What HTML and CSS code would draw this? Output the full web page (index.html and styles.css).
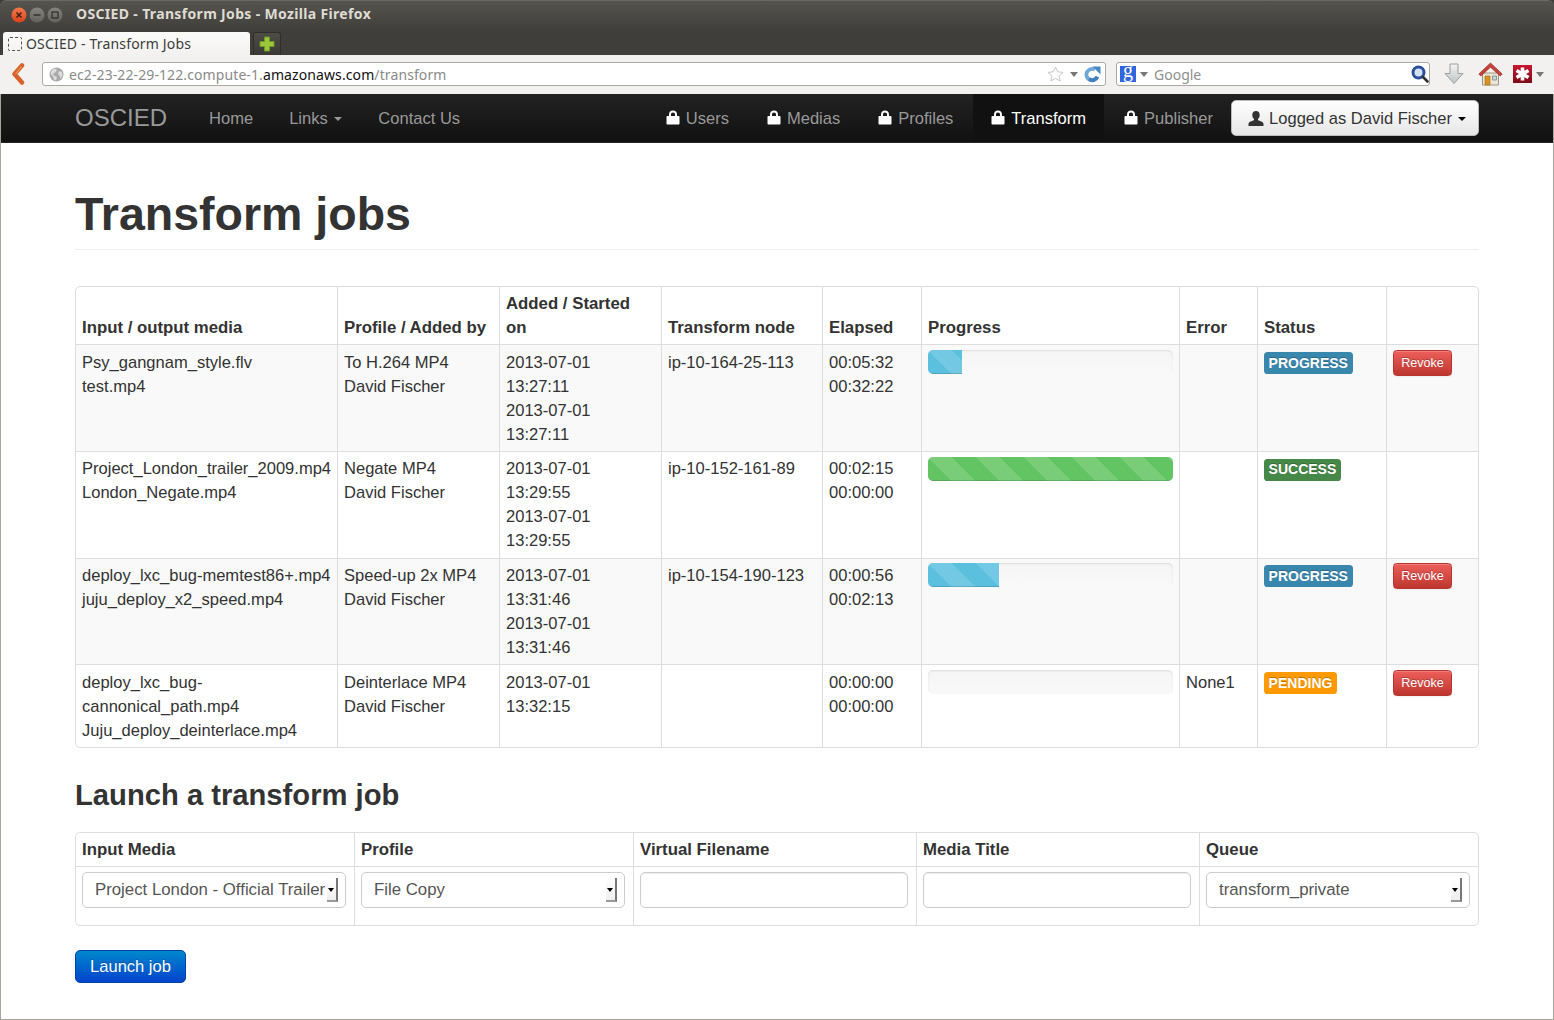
FILE: index.html
```html
<!DOCTYPE html>
<html>
<head>
  <title>OSCIED - Transform Jobs</title>
  <link rel="stylesheet" href="styles.css">
</head>
<body>

  <svg class="defs" width="0" height="0">
    <symbol id="lock" viewBox="0 0 14 15">
      <path d="M3 6V4.500C3 2 4.700 .6 7 .6s4 1.400 4 3.900V6h1.500c.6 0 1 .4 1 1v6.500c0 .6-.4 1-1 1h-11c-.6 0-1-.4-1-1V7c0-.6.4-1 1-1zM5 6h4V4.500C9 3.300 8.200 2.600 7 2.600S5 3.300 5 4.500z" fill="#fff"/>
    </symbol>
    <symbol id="tri" viewBox="0 0 8 5">
      <path d="M0 0h8L4 5z"/>
    </symbol>
  </svg>

  <div class="window">

    <!-- Firefox window chrome -->
    <div class="titlebar">
      <div class="wm-buttons">
        <svg class="wm-btn" viewBox="0 0 16 16"><defs><linearGradient id="redBtn" x1="0" y1="0" x2="0" y2="1"><stop offset="0" stop-color="#f47a4a"/><stop offset="1" stop-color="#d8431a"/></linearGradient></defs><circle cx="8" cy="8" r="7.500" fill="url(#redBtn)"/><path d="M5.500 5.500l5 5m0-5l-5 5" stroke="#3c2015" stroke-width="1.500"/></svg>
        <svg class="wm-btn" viewBox="0 0 16 16"><defs><linearGradient id="greyBtn" x1="0" y1="0" x2="0" y2="1"><stop offset="0" stop-color="#85847e"/><stop offset="1" stop-color="#62615c"/></linearGradient></defs><circle cx="8" cy="8" r="7.500" fill="url(#greyBtn)"/><path d="M4.500 8h7" stroke="#33322e" stroke-width="1.500"/></svg>
        <svg class="wm-btn" viewBox="0 0 16 16"><circle cx="8" cy="8" r="7.500" fill="url(#greyBtn)"/><rect x="5" y="5" width="6" height="6" fill="none" stroke="#33322e" stroke-width="1.300"/></svg>
      </div>
      <span class="window-title">OSCIED - Transform Jobs - Mozilla Firefox</span>
    </div>

    <div class="tabbar">
      <div class="tab">
        <span class="tab-favicon"></span>
        <span class="tab-title">OSCIED - Transform Jobs</span>
      </div>
      <div class="newtab">
        <svg width="16" height="16" viewBox="0 0 16 16"><path d="M5.500 1h5v4.500H15v5h-4.500V15h-5v-4.500H1v-5h4.500z" fill="#9cc63c" stroke="#6f9a22"/></svg>
      </div>
    </div>

    <div class="toolbar">
      <svg class="back-icon" width="14" height="22" viewBox="0 0 14 22"><path d="M11 2.500L3.500 11l7.500 8.500" fill="none" stroke="#d5632a" stroke-width="4.500" stroke-linejoin="round" stroke-linecap="round"/><path d="M10.500 3.500L4.500 11" fill="none" stroke="#f09a62" stroke-width="1.200"/></svg>

      <div class="urlbar">
        <svg class="globe" width="15" height="15" viewBox="0 0 15 15"><circle cx="7.500" cy="7.500" r="7" fill="#a9a9a9"/><path d="M5 1.500l3 1-1 2.500-3 1.500 1.500 2.500 2.500 1-1 3.500-2-1-1-3.500L1.500 7C2 4.500 3 2.500 5 1.500zM10 4l3 1 .5 3.500-2 3-1-3-1.500-1.500z" fill="#dcdcdc"/></svg>
        <span class="url"><span class="url-dim">ec2-23-22-29-122.compute-1.</span>amazonaws.com<span class="url-dim">/transform</span></span>
        <svg class="star" width="17" height="16" viewBox="0 0 17 16"><path d="M8.500 1l2.200 4.800 5.300.6-3.900 3.500 1.100 5.100-4.700-2.600L3.800 15l1.100-5.100L1 6.400l5.300-.6z" fill="#fff" stroke="#c9c9c9"/></svg>
        <svg class="tri" width="8" height="5"><use href="#tri"/></svg>
        <svg class="reload" width="17" height="17" viewBox="0 0 17 17"><path d="M13.400 10.800A5.700 5.700 0 1 1 10.800 3.600" fill="none" stroke="#6ea6d8" stroke-width="3.800"/><path d="M13.400 10.800A5.700 5.700 0 0 1 5 13" fill="none" stroke="#3f7fbe" stroke-width="3.800"/><path d="M8.500 .5h8v8z" fill="#4a87c4"/></svg>
      </div>

      <div class="searchbar">
        <span class="google-g">g</span>
        <svg class="tri" width="8" height="5"><use href="#tri"/></svg>
        <span class="search-text">Google</span>
        <svg class="magnifier" width="18" height="18" viewBox="0 0 18 18"><circle cx="7.500" cy="7.500" r="5.500" fill="#d5e2f2" stroke="#2b4f9e" stroke-width="3"/><path d="M12 12l4.500 4.500" stroke="#333" stroke-width="2.600" stroke-linecap="round"/></svg>
      </div>

      <svg class="download" width="20" height="23" viewBox="0 0 20 23"><defs><linearGradient id="dlFill" x1="0" y1="0" x2="0" y2="1"><stop offset="0" stop-color="#f4f4f2"/><stop offset="1" stop-color="#bcc3c6"/></linearGradient></defs><path d="M6 1h8v9.500h5L10 20.500 1 10.500h5z" fill="url(#dlFill)" stroke="#9b9e9e"/></svg>

      <svg class="home" width="25" height="24" viewBox="0 0 25 24"><path d="M4.500 11h16v12h-16z" fill="#e9e6d8" stroke="#9c9684"/><path d="M7 14h5v9H7z" fill="#d8921f" stroke="#a56c12" stroke-width=".6"/><path d="M14.500 14h4v4h-4z" fill="#c9d3d8" stroke="#7f8584" stroke-width=".8"/><path d="M12.500 1L.8 12l2 2 9.700-8.800L22.200 14l2-2z" fill="#c8413a" stroke="#98302b" stroke-width=".7"/></svg>

      <div class="addon">
        <svg width="19" height="18" viewBox="0 0 19 18"><defs><linearGradient id="addonFill" x1="0" y1="0" x2="0" y2="1"><stop offset="0" stop-color="#c9152f"/><stop offset="1" stop-color="#7d0b18"/></linearGradient></defs><rect width="19" height="18" fill="url(#addonFill)"/><path d="M9.500 2.500v13M3.500 5.500l12 7M15.500 5.500l-12 7" stroke="#fff" stroke-width="3.600"/></svg>
        <svg class="tri" width="8" height="5"><use href="#tri"/></svg>
      </div>
    </div>

    <!-- Page -->
    <div class="page">
      <div class="navbar">
        <a class="brand">OSCIED</a>
        <a class="nav-link">Home</a>
        <a class="nav-link">Links <span class="caret"></span></a>
        <a class="nav-link">Contact Us</a>

        <div class="nav-right">
          <a class="nav-link"><svg class="lock-icon"><use href="#lock"/></svg>Users</a>
          <a class="nav-link"><svg class="lock-icon"><use href="#lock"/></svg>Medias</a>
          <a class="nav-link"><svg class="lock-icon"><use href="#lock"/></svg>Profiles</a>
          <a class="nav-link active"><svg class="lock-icon"><use href="#lock"/></svg>Transform</a>
          <a class="nav-link"><svg class="lock-icon"><use href="#lock"/></svg>Publisher</a>
          <button class="user-btn">
            <svg class="user-icon" viewBox="0 0 16 15"><path d="M8 0c2.300 0 3.700 1.600 3.700 3.900 0 1.700-.8 3.300-1.700 4.100v1.300c1.800.7 5.500 1.600 5.500 3.700V15H.500v-2c0-2.100 3.700-3 5.500-3.700V8C5.100 7.200 4.300 5.600 4.300 3.900 4.300 1.600 5.700 0 8 0z" fill="#333"/></svg>
            Logged as David Fischer <span class="caret dark"></span>
          </button>
        </div>
      </div>

      <div class="container">
        <div class="page-header">
          <h1>Transform jobs</h1>
        </div>

        <table class="jobs">
          <colgroup>
            <col class="j1"><col class="j2"><col class="j3"><col class="j4"><col class="j5"><col class="j6"><col class="j7"><col class="j8"><col class="j9">
          </colgroup>
          <thead>
            <tr>
              <th>Input / output media</th>
              <th>Profile / Added by</th>
              <th>Added / Started on</th>
              <th>Transform node</th>
              <th>Elapsed</th>
              <th>Progress</th>
              <th>Error</th>
              <th>Status</th>
              <th></th>
            </tr>
          </thead>
          <tbody>
            <tr>
              <td>Psy_gangnam_style.flv<br>test.mp4</td>
              <td>To H.264 MP4<br>David Fischer</td>
              <td>2013-07-01 13:27:11<br>2013-07-01 13:27:11</td>
              <td>ip-10-164-25-113</td>
              <td>00:05:32<br>00:32:22</td>
              <td><div class="progress"><div class="bar info" style="width: 14%"></div></div></td>
              <td></td>
              <td><span class="label info">PROGRESS</span></td>
              <td><button class="btn-revoke">Revoke</button></td>
            </tr>
            <tr>
              <td>Project_London_trailer_2009.mp4<br>London_Negate.mp4</td>
              <td>Negate MP4<br>David Fischer</td>
              <td>2013-07-01 13:29:55<br>2013-07-01 13:29:55</td>
              <td>ip-10-152-161-89</td>
              <td>00:02:15<br>00:00:00</td>
              <td><div class="progress"><div class="bar success" style="width: 100%"></div></div></td>
              <td></td>
              <td><span class="label success">SUCCESS</span></td>
              <td></td>
            </tr>
            <tr>
              <td>deploy_lxc_bug-memtest86+.mp4<br>juju_deploy_x2_speed.mp4</td>
              <td>Speed-up 2x MP4<br>David Fischer</td>
              <td>2013-07-01 13:31:46<br>2013-07-01 13:31:46</td>
              <td>ip-10-154-190-123</td>
              <td>00:00:56<br>00:02:13</td>
              <td><div class="progress"><div class="bar info" style="width: 29%"></div></div></td>
              <td></td>
              <td><span class="label info">PROGRESS</span></td>
              <td><button class="btn-revoke">Revoke</button></td>
            </tr>
            <tr>
              <td>deploy_lxc_bug-cannonical_path.mp4<br>Juju_deploy_deinterlace.mp4</td>
              <td>Deinterlace MP4<br>David Fischer</td>
              <td>2013-07-01 13:32:15</td>
              <td></td>
              <td>00:00:00<br>00:00:00</td>
              <td><div class="progress"></div></td>
              <td>None1</td>
              <td><span class="label warning">PENDING</span></td>
              <td><button class="btn-revoke">Revoke</button></td>
            </tr>
          </tbody>
        </table>

        <h2>Launch a transform job</h2>

        <table class="launch">
          <colgroup>
            <col class="l1"><col class="l2"><col class="l3"><col class="l4"><col class="l5">
          </colgroup>
          <thead>
            <tr>
              <th>Input Media</th>
              <th>Profile</th>
              <th>Virtual Filename</th>
              <th>Media Title</th>
              <th>Queue</th>
            </tr>
          </thead>
          <tbody>
            <tr>
              <td>
                <div class="select-wrap">
                  <select><option>Project London - Official Trailer</option></select>
                  <span class="select-arrow"></span>
                </div>
              </td>
              <td>
                <div class="select-wrap">
                  <select><option>File Copy</option></select>
                  <span class="select-arrow"></span>
                </div>
              </td>
              <td><input type="text"></td>
              <td><input type="text"></td>
              <td>
                <div class="select-wrap">
                  <select><option>transform_private</option></select>
                  <span class="select-arrow"></span>
                </div>
              </td>
            </tr>
          </tbody>
        </table>

        <button class="btn-launch">Launch job</button>
      </div>
    </div>

  </div>

</body>
</html>
```

FILE: styles.css
```css
* {
  box-sizing: border-box;
}

html, body {
  margin: 0;
  height: 100%;
  overflow: hidden;
}

body {
  font-family: "Liberation Sans", Arial, sans-serif;
  font-size: 16.55px;
  line-height: 24px;
  color: #333;
  background: #3c3b37;
}

.defs {
  position: absolute;
}

.window {
  height: 1020px;
  display: flex;
  flex-direction: column;
}

/* Browser chrome */
.titlebar {
  height: 31px;
  flex: none;
  display: flex;
  align-items: center;
  padding: 0 0 2px 11px;
  background: linear-gradient(#55544f, #3f3e3a);
  border-top: 1px solid #6a6963;
  border-radius: 6px 6px 0 0;
}

.wm-buttons {
  display: flex;
  gap: 2px;
  width: 65px;
}

.wm-btn {
  width: 16px;
  height: 16px;
}

.window-title {
  padding-bottom: 2px;
  font-family: "Noto Sans", sans-serif;
  font-size: 14px;
  font-weight: bold;
  line-height: 20px;
  letter-spacing: 0.34px;
  color: #dfdbd2;
}

.tabbar {
  height: 24px;
  flex: none;
  display: flex;
  align-items: flex-end;
  padding-left: 3px;
  gap: 3px;
  background: #3f3e3a;
}

.tab {
  width: 247px;
  height: 23px;
  display: flex;
  align-items: center;
  gap: 4px;
  padding-left: 5px;
  font-family: "Noto Sans", sans-serif;
  font-size: 14px;
  line-height: 20px;
  color: #3c3c3c;
  background: linear-gradient(#fbfbfa, #f2f1ef);
  border-radius: 3px 3px 0 0;
}

.tab-title {
  letter-spacing: 0.17px;
}

.tab-favicon {
  width: 14px;
  height: 14px;
  border: 1px dashed #555;
  border-radius: 2px;
}

.newtab {
  width: 28px;
  height: 23px;
  display: flex;
  align-items: center;
  justify-content: center;
  background: linear-gradient(#4d4c47, #3a3935);
  border: 1px solid #2f2e2b;
  border-bottom: none;
  border-radius: 3px 3px 0 0;
}

.toolbar {
  height: 39px;
  flex: none;
  display: flex;
  align-items: center;
  padding: 0 0 1px 11px;
  background: #f2f1ef;
  font-family: "Noto Sans", sans-serif;
  font-size: 14px;
}

.tri {
  flex: none;
  fill: #777;
}

.back-icon {
  flex: none;
  margin-right: 17px;
}

.urlbar, .searchbar {
  flex: none;
  height: 24px;
  display: flex;
  align-items: center;
  background: #fff;
  border: 1px solid #aaa9a4;
  border-radius: 3px;
}

.urlbar {
  width: 1064px;
  padding-left: 6px;
  margin-right: 10px;
}

.globe {
  flex: none;
  margin-right: 5px;
}

.url {
  flex: 1;
  padding-top: 1px;
  line-height: 20px;
  letter-spacing: 0.1px;
  color: #111;
}

.url-dim {
  color: #8a8a8a;
}

.star {
  margin-right: 6px;
}

.reload {
  margin: 0 4px 0 6px;
}

.searchbar {
  width: 314px;
  padding-left: 3px;
  margin-right: 14px;
}

.google-g {
  width: 16px;
  height: 16px;
  margin-right: 4px;
  text-align: center;
  font-family: "Liberation Serif", serif;
  font-size: 20px;
  line-height: 9px;
  color: #fff;
  background: #2f66e0;
}

.search-text {
  flex: 1;
  margin-left: 6px;
  padding-top: 1px;
  line-height: 20px;
  color: #8f8f8f;
}

.download {
  flex: none;
  margin-right: 14px;
}

.home {
  flex: none;
  margin-right: 10px;
}

.addon {
  display: flex;
  align-items: center;
  gap: 4px;
}

/* Page */
.page {
  flex: 1;
  background: #fff;
  border: 1px solid #a5a59b;
  border-top: none;
}

.navbar {
  height: 49px;
  display: flex;
  align-items: center;
  padding: 0 74px;
  background: linear-gradient(#222, #111);
  border-bottom: 1px solid #252525;
}

.brand {
  font-size: 24px;
  color: #999;
  margin-right: 24px;
}

.nav-link {
  display: block;
  height: 48px;
  padding: 13px 18px 11px;
  color: #999;
}

.nav-link.active {
  color: #fff;
  background: #111;
}

.nav-right {
  margin-left: auto;
  display: flex;
  align-items: center;
  gap: 2px;
}

.lock-icon {
  width: 14px;
  height: 15px;
  margin-right: 6px;
  vertical-align: -1px;
}

.caret {
  display: inline-block;
  border-top: 4px solid #999;
  border-left: 4px solid transparent;
  border-right: 4px solid transparent;
  margin-left: 2px;
  vertical-align: 3px;
}

.caret.dark {
  border-top-color: #000;
  margin-left: 1px;
}

.user-btn {
  flex: none;
  width: 248px;
  height: 36px;
  margin-left: -2px;
  padding: 1px 0 0 4px;
  font: inherit;
  color: #333;
  background: linear-gradient(#fff, #e6e6e6);
  border: 1px solid #bbb;
  border-radius: 5px;
  cursor: pointer;
}

.user-icon {
  width: 16px;
  height: 15px;
  vertical-align: -2px;
}

.container {
  padding: 0 74px;
}

.page-header {
  margin-top: 47px;
  padding-bottom: 11px;
  border-bottom: 1px solid #eee;
  margin-bottom: 36px;
}

h1 {
  margin: 0;
  font-size: 46.5px;
  line-height: 48px;
}

h2 {
  margin: 29px 0 19px;
  font-size: 29.2px;
  line-height: 36px;
}

/* Tables */
table {
  width: 1404px;
  table-layout: fixed;
  border-collapse: separate;
  border-spacing: 0;
  border: 1px solid #ddd;
  border-radius: 5px;
}

th, td {
  padding: 5.2px 6px 4.4px;
  text-align: left;
  vertical-align: top;
  border-left: 1px solid #ddd;
  border-top: 1px solid #ddd;
}

th {
  padding: 4.8px 6px 4.6px;
  font-size: 16.8px;
  vertical-align: bottom;
  border-top: none;
}

th:first-child, td:first-child {
  border-left: none;
}

.jobs tbody tr:nth-child(odd) td {
  background: #f9f9f9;
}

.jobs tbody tr:last-child td {
  padding: 5.4px 6px 4.2px;
}

.j1 { width: 261px; }
.j2 { width: 162px; }
.j3 { width: 162px; }
.j4 { width: 161px; }
.j5 { width: 99px; }
.j6 { width: 258px; }
.j7 { width: 78px; }
.j8 { width: 129px; }
.j9 { width: 92px; }

.l1 { width: 278px; }
.l2 { width: 279px; }
.l3 { width: 283px; }
.l4 { width: 283px; }
.l5 { width: 279px; }

.progress {
  height: 24px;
  margin-top: -0.4px;
  overflow: hidden;
  background: linear-gradient(#f5f5f5, #f9f9f9);
  border-radius: 5px;
  box-shadow: inset 0 1px 2px rgba(0,0,0,0.1);
}

.bar {
  height: 100%;
  background-image: linear-gradient(45deg, rgba(255,255,255,0.15) 25%, transparent 25%, transparent 50%, rgba(255,255,255,0.15) 50%, rgba(255,255,255,0.15) 75%, transparent 75%, transparent);
  background-size: 48px 48px;
  box-shadow: inset 0 -1px 0 rgba(0,0,0,0.15);
}

.bar.info {
  background-color: #5bc0de;
}

.bar.success {
  background-color: #62c462;
}

.label {
  display: inline-block;
  padding: 2.400px 4.600px;
  font-size: 14px;
  font-weight: bold;
  line-height: 17px;
  color: #fff;
  text-shadow: 0 -1px 0 rgba(0,0,0,0.25);
  border-radius: 3.600px;
  vertical-align: baseline;
}

.label.info {
  background: #3a87ad;
}

.label.success {
  background: #468847;
}

.label.warning {
  background: #ff9900;
}

.btn-revoke {
  display: block;
  width: 59px;
  height: 26px;
  margin-top: -0.4px;
  padding: 0;
  font: 12.600px "Liberation Sans", Arial, sans-serif;
  color: #fff;
  text-shadow: 0 -1px 0 rgba(0,0,0,0.25);
  background: linear-gradient(#ee5f5b, #bd362f);
  border: 1px solid #b8352e;
  border-radius: 3.600px;
  box-shadow: inset 0 1px 0 rgba(255,255,255,0.2), 0 1px 2px rgba(0,0,0,0.05);
  cursor: pointer;
}

/* Launch form */
.launch td {
  padding: 4.800px 6px 16.800px;
}

.select-wrap {
  position: relative;
  width: 264px;
}

select, input {
  display: block;
  height: 36px;
  font: inherit;
  color: #555;
  background: #fff;
  border: 1px solid #ccc;
  border-radius: 5px;
  outline: none;
}

select {
  width: 100%;
  padding: 0 8px 0 12px;
  font-size: 16.8px;
  appearance: none;
}

input {
  width: 268px;
  padding: 0 7px;
  box-shadow: inset 0 1px 1px rgba(0,0,0,0.075);
}

.select-arrow {
  position: absolute;
  top: 6px;
  right: 8px;
  width: 11px;
  height: 24px;
  background: linear-gradient(#fff, #eee);
  border-right: 2px solid #777;
  border-bottom: 2px solid #999;
}

.select-arrow::after {
  content: "";
  position: absolute;
  left: 1px;
  top: 10px;
  border-top: 4px solid #000;
  border-left: 3px solid transparent;
  border-right: 3px solid transparent;
}

.btn-launch {
  display: block;
  width: 111px;
  height: 33px;
  margin-top: 24px;
  padding: 1px 0 0;
  font: inherit;
  color: #fff;
  text-shadow: 0 -1px 0 rgba(0,0,0,0.25);
  background: linear-gradient(#0088cc, #0044cc);
  border: 1px solid #0044aa;
  border-radius: 5px;
  cursor: pointer;
}
```
